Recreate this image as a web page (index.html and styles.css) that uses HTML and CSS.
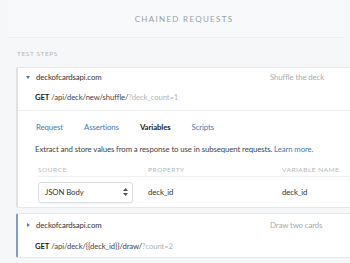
FILE: index.html
```html
<!DOCTYPE html>
<html lang="en">
<head>
    <meta charset="UTF-8">
    <title>Chained Requests</title>
    <link rel="stylesheet" href="styles.css">
</head>
<body>
    <div class="page">
        <div class="header">Chained Requests</div>

        <div class="section-title">Test steps</div>

        <div class="step open">
            <div class="step-top">
                <div class="step-row">
                    <span class="caret down"></span>
                    <span class="host">deckofcardsapi.com</span>
                    <span class="step-name">Shuffle the deck</span>
                </div>
                <div class="step-url"><b>GET</b> /api/deck/new/shuffle/<span class="query">?deck_count=1</span></div>
            </div>

            <div class="tabs">
                <a class="tab">Request</a>
                <a class="tab">Assertions</a>
                <a class="tab active">Variables</a>
                <a class="tab">Scripts</a>
            </div>

            <p class="hint">Extract and store values from a response to use in subsequent requests. <a class="link">Learn more.</a></p>

            <div class="vars">
                <div class="vars-head">
                    <span class="col-source">Source</span>
                    <span class="col-prop">Property</span>
                    <span class="col-name">Variable name</span>
                </div>
                <div class="vars-row">
                    <div class="col-source">
                        <div class="select">JSON Body
                            <svg width="5" height="8" viewBox="0 0 5 8"><path d="M2.5 0 L5 3 H0 Z M2.5 8 L5 5 H0 Z" fill="#555"/></svg>
                        </div>
                    </div>
                    <span class="col-prop">deck_id</span>
                    <span class="col-name">deck_id</span>
                </div>
            </div>
        </div>

        <div class="step closed">
            <div class="step-row">
                <span class="caret right"></span>
                <span class="host">deckofcardsapi.com</span>
                <span class="step-name">Draw two cards</span>
            </div>
            <div class="step-url"><b>GET</b> /api/deck/{{deck_id}}/draw/<span class="query">?count=2</span></div>
        </div>
    </div>
</body>
</html>
```

FILE: styles.css
```css
* {
    margin: 0;
    padding: 0;
    box-sizing: border-box;
}

body {
    font-family: Lato, 'Open Sans', sans-serif;
    background: #f6f7f8;
    color: #333;
    width: 350px;
    height: 263px;
    overflow: hidden;
}

.page {
    width: 350px;
    padding-left: 8px;
}

.header {
    height: 38px;
    line-height: 38px;
    text-align: center;
    font-size: 8px;
    letter-spacing: 1.3px;
    text-transform: uppercase;
    color: #9a9ea3;
    border-bottom: 1px solid #eceef0;
    background: #f8f9fa;
    width: 336px;
    padding-left: 16px;
}

.section-title {
    padding: 12px 0 0 9px;
    height: 29px;
    font-size: 6.5px;
    letter-spacing: 0.6px;
    text-transform: uppercase;
    color: #b4b8bc;
}

.step {
    margin-left: 8px;
    margin-right: -20px;
    background: #fff;
    border: 1px solid #e6e8ea;
    border-left: 2px solid #dfe2e5;
    border-radius: 2px;
    font-size: 7.8px;
    letter-spacing: -0.1px;
    line-height: 11px;
}

.step.closed {
    margin-top: 5px;
    border-left-color: #7f9fc7;
    padding-bottom: 5px;
}

.step-top {
    border-bottom: 1px solid #eef0f2;
    padding-bottom: 7px;
}

.step-row {
    display: flex;
    align-items: center;
    height: 18px;
    padding-left: 8px;
}

.step.closed .step-row {
    height: 22px;
}

.caret {
    width: 0;
    height: 0;
    margin-right: 6px;
}

.caret.down {
    border-left: 2.5px solid transparent;
    border-right: 2.5px solid transparent;
    border-top: 3px solid #4a77b4;
}

.caret.right {
    border-top: 2.5px solid transparent;
    border-bottom: 2.5px solid transparent;
    border-left: 3px solid #4a77b4;
    margin-left: 1px;
}

.host {
    color: #333;
}

.step-name {
    margin-left: auto;
    width: 99px;
    color: #a6abb0;
}

.step-url {
    padding: 6px 0 0 17px;
    color: #444;
    font-size: 7.7px;
}

.step.closed .step-url {
    padding-top: 5px;
}

.step-url b {
    color: #222;
}

.query {
    color: #b0b5ba;
}

.tabs {
    display: flex;
    gap: 21px;
    padding: 11px 0 0 18px;
    height: 33px;
}

.tab {
    color: #4a77b4;
}

.tab.active {
    color: #222;
    font-weight: bold;
}

.hint {
    padding-left: 17px;
    height: 19px;
    color: #444;
}

.link {
    color: #4a77b4;
}

.vars {
    padding-left: 20px;
}

.vars-head,
.vars-row {
    display: flex;
    align-items: center;
}

.vars-head {
    height: 14px;
    font-size: 6.5px;
    letter-spacing: 0.5px;
    text-transform: uppercase;
    color: #b4b8bc;
    border-bottom: 1px solid #eef0f2;
}

.vars-row {
    height: 30px;
    color: #333;
}

.col-source {
    width: 110px;
}

.col-prop {
    width: 134px;
}

.select {
    display: flex;
    align-items: center;
    justify-content: space-between;
    width: 95px;
    height: 21px;
    padding: 0 4px 0 6px;
    border: 1px solid #dcdfe2;
    border-radius: 3px;
    background: #fff;
    box-shadow: 0 1px 1px rgba(0, 0, 0, 0.05);
}
```
